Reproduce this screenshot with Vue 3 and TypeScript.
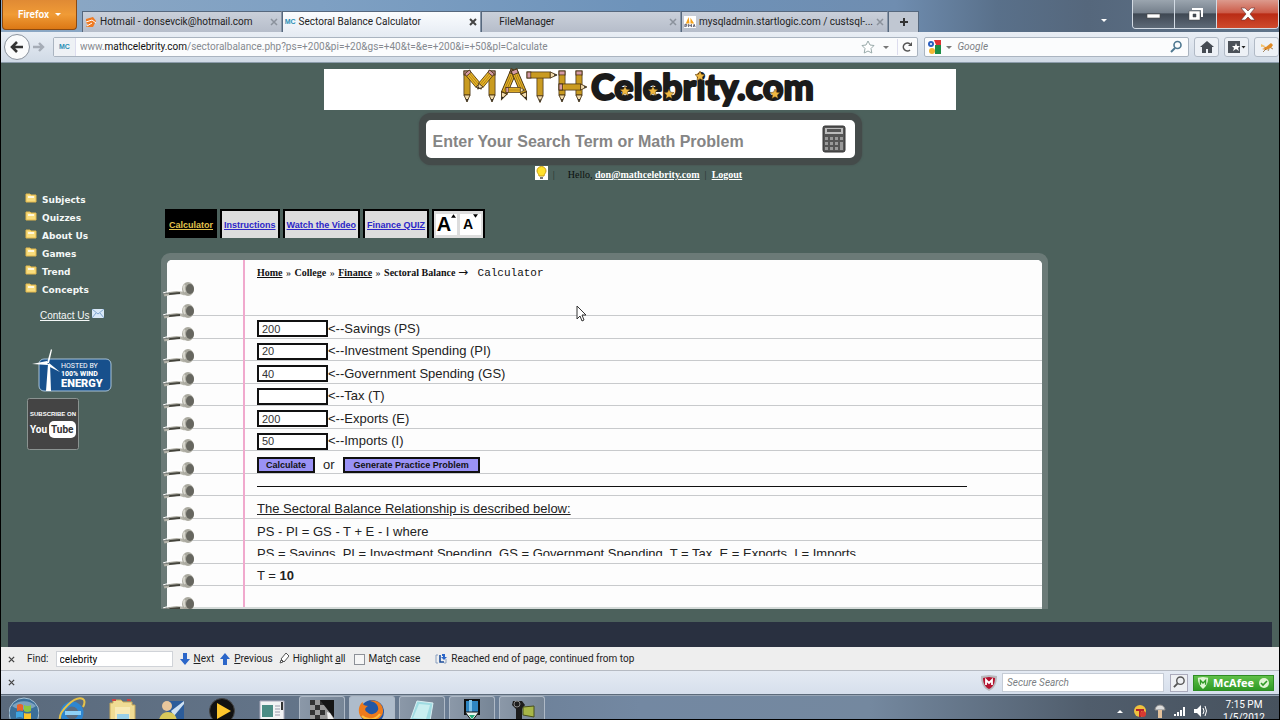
<script setup lang="ts">
import { ref } from 'vue'

interface BrowserTab { title: string; kind: 'hotmail' | 'mc' | 'none' | 'pma'; active: boolean }
interface Field { id: string; label: string; value: string }
interface Star { x: number; y: number }

const browserTabs: BrowserTab[] = [
  { title: 'Hotmail - donsevcik@hotmail.com', kind: 'hotmail', active: false },
  { title: 'Sectoral Balance Calculator', kind: 'mc', active: true },
  { title: 'FileManager', kind: 'none', active: false },
  { title: 'mysqladmin.startlogic.com / custsql-...', kind: 'pma', active: false },
]

const menu: string[] = ['Subjects', 'Quizzes', 'About Us', 'Games', 'Trend', 'Concepts']
const pageTabs: string[] = ['Calculator', 'Instructions', 'Watch the Video', 'Finance QUIZ']

const fields = ref<Field[]>([
  { id: 'ps', label: 'Savings (PS)', value: '200' },
  { id: 'pi', label: 'Investment Spending (PI)', value: '20' },
  { id: 'gs', label: 'Government Spending (GS)', value: '40' },
  { id: 't', label: 'Tax (T)', value: '' },
  { id: 'e', label: 'Exports (E)', value: '200' },
  { id: 'i', label: 'Imports (I)', value: '50' },
])

const stars: Star[] = [
  { x: 165, y: 22 }, { x: 193, y: 22 }, { x: 209, y: 25 }, { x: 240, y: 7 }, { x: 315, y: 25 },
]
const pencils: string[] = [
  'translate(7 2) scale(1 1)',
  'translate(32 2) scale(1 1)',
  'translate(7 3) rotate(-40) scale(1 .72)',
  'translate(32 3) rotate(40) scale(1 .72)',
  'translate(54 1) rotate(23) scale(1 1.04)',
  'translate(54 1) rotate(-23) scale(1 1.04)',
  'translate(46 21) rotate(-90) scale(.8 .6)',
  'translate(80 4) scale(1 .95)',
  'translate(67 6) rotate(-90) scale(1 .97)',
  'translate(102 2) scale(1 1)',
  'translate(119 2) scale(1 1)',
  'translate(99 18) rotate(-90) scale(1 .9)',
]
const findText = ref('celebrity')
const matchCase = ref(false)
</script>

<template>
  <div class="window">
    <header class="titlebar">
      <button class="firefox">Firefox <span class="tri"></span></button>
      <nav class="tabs" aria-label="Browser tabs">
        <div v-for="t in browserTabs" :key="t.title" class="tab" :class="{ active: t.active }">
          <svg v-if="t.kind === 'hotmail'" class="fav" viewBox="0 0 12 12"><path d="M1 3L8 1l3 4-3 6-7 0 2-3-2-1z" fill="#ef7a22" /><path d="M1 6l6-2 4 3M2 10l5-3" stroke="#fff" fill="none" /></svg>
          <span v-else-if="t.kind === 'mc'" class="mc">MC</span>
          <svg v-else-if="t.kind === 'pma'" class="fav pma" viewBox="0 0 13 13"><rect width="13" height="13" fill="#fff" /><path d="M2 8l3-7 1 7zM7 8V2l4 6z" fill="#f5a21b" /><path d="M1 12V9h2v2H1M5 12V9l2 2 1-2v3M10 12l1-3 1 3" stroke="#556" fill="none" /></svg>
          <span v-else class="fav"></span>
          <span class="tab-title">{{ t.title }}</span>
          <button class="close" aria-label="Close tab"><svg viewBox="0 0 8 8"><path d="M1 1l6 6M7 1L1 7" /></svg></button>
        </div>
        <button class="newtab" aria-label="New tab"><svg viewBox="0 0 10 10"><path d="M5 1v8M1 5h8" /></svg></button>
      </nav>
      <span class="all-tabs tri"></span>
      <div class="controls">
        <button aria-label="Minimize"><svg viewBox="0 0 16 14"><rect x="1" y="7" width="13" height="4" fill="#fff" stroke="#444" stroke-width=".6" /></svg></button>
        <button aria-label="Restore"><svg viewBox="0 0 16 14"><path d="M4 1h11v9h-2V3H4z" fill="#fff" /><path d="M1 4h11v9H1zM5 7v3h3V7z" fill="#fff" fill-rule="evenodd" stroke="#444" stroke-width=".5" /></svg></button>
        <button class="red" aria-label="Close"><svg viewBox="0 0 16 14"><path d="M1 1h4l3 3 3-3h4l-5 6 5 6h-4L8 10l-3 3H1l5-6z" fill="#fff" stroke="#633" stroke-width=".6" /></svg></button>
      </div>
    </header>

    <div class="navbar">
      <button class="back" aria-label="Back"><svg viewBox="0 0 14 12"><path d="M7 1L2 6l5 5M2 6h11" fill="none" stroke="#333" stroke-width="2.6" /></svg></button>
      <button class="fwd" aria-label="Forward"><svg viewBox="0 0 12 10"><path d="M6 1l4 4-4 4M0 5h10" fill="none" stroke="#a5acb6" stroke-width="2.4" /></svg></button>
      <div class="urlbox">
        <span class="mc ident">MC</span>
        <a class="url" href="#">www.<b>mathcelebrity.com</b>/sectoralbalance.php?ps=+200&amp;pi=+20&amp;gs=+40&amp;t=&amp;e=+200&amp;i=+50&amp;pl=Calculate</a>
        <svg class="i14" viewBox="0 0 14 14"><path d="M7 1l2 4 4 .5-3 3 .8 4.500L7 11l-3.800 2L4 8.500l-3-3L5 5z" fill="#fff" stroke="#9aa" /></svg>
        <span class="tri small"></span>
        <button class="reload" aria-label="Reload"><svg viewBox="0 0 12 12"><path d="M9 9a4 4 0 1 1 0-6" fill="none" stroke="#555" stroke-width="1.600" /><path d="M11 1v4H7z" fill="#555" /></svg></button>
      </div>
      <div class="gsearch">
        <svg class="google" viewBox="0 0 14 14"><rect width="14" height="14" fill="#fff" /><path d="M7 0h7v5H9z" fill="#d33" /><path d="M8 5h6v9H8z" fill="#1c8d45" /><circle cx="4" cy="4" r="3" fill="#2b5fc0" /><circle cx="4" cy="4" r="1" fill="#fff" /><circle cx="5" cy="11" r="3" fill="#f2b632" /></svg>
        <span class="tri small"></span>
        <input aria-label="Google search" placeholder="Google" />
        <svg class="i14" viewBox="0 0 14 14"><circle cx="8.500" cy="5" r="3.500" fill="none" stroke="#4e7890" stroke-width="1.600" /><path d="M6 8l-4 4" stroke="#4e7890" stroke-width="2" /></svg>
      </div>
      <button class="tool" aria-label="Home"><svg viewBox="0 0 14 12"><path d="M7 0l7 6h-2v6H8V8H6v4H2V6H0z" fill="#454b53" /></svg></button>
      <button class="tool" aria-label="Bookmarks"><svg viewBox="0 0 18 12"><rect width="12" height="12" fill="#4b5158" /><path d="M8 2l1 3h3L10 7l1 3-3-2-3 2 1-3-2-2h3z" fill="#fff" /><path d="M13.500 5h4l-2 2.500z" fill="#222" /></svg></button>
      <button class="tool last" aria-label="Add-on"><svg viewBox="0 0 14 12"><path d="M2 5l4 1 5-4 2 2-2 3-5 2-4-1 3-1z" fill="#df8a26" /><path d="M1 3l4 2-4 1z" fill="#f4c066" /><path d="M3 11l3-3M8 10l1-2M11 7l2 1" stroke="#8a5a20" stroke-width=".7" /></svg></button>
    </div>

    <main class="page">
      <div class="banner">
        <svg class="logo" viewBox="0 0 360 41" role="img" aria-label="Math Celebrity logo">
          <defs>
            <g id="pencil">
              <rect x="-3" y="0" width="6" height="24" fill="#eab526" stroke="#4a3412" stroke-width=".9" />
              <path d="M-1 5v19M1 5v19" stroke="#8d6a17" stroke-width=".7" />
              <rect x="-3" y="0" width="6" height="4" fill="#d59aa5" stroke="#4a3412" stroke-width=".9" />
              <path d="M-3 24h6L0 31z" fill="#f2dcae" stroke="#4a3412" stroke-width=".9" />
              <path d="M-1 28h2L0 31z" fill="#222" />
            </g>
          </defs>
          <use v-for="(p, n) in pencils" :key="n" href="#pencil" :transform="p" />
          <text x="131" y="31" class="logo-text">Celebrity.com</text>
          <path v-for="(s, n) in stars" :key="'s' + n" :transform="`translate(${s.x} ${s.y})`" d="M0-5l1.500 3.200 3.500.4-2.600 2.400.7 3.500L0 2.800l-3.100 1.700.7-3.500L-5-1.400l3.500-.4z" fill="#f0b840" stroke="#4a3412" stroke-width=".5" />
        </svg>
      </div>

      <div class="site-search">
        <input aria-label="Search term or math problem" placeholder="Enter Your Search Term or Math Problem" />
        <button aria-label="Calculator"><svg viewBox="0 0 24 28"><rect x="1" y="1" width="22" height="26" rx="2" fill="#555" stroke="#333" /><rect x="3" y="3" width="18" height="6" fill="#bbb" /><rect x="5" y="4" width="14" height="3" fill="#555" /><g fill="#999"><path d="M3 12h3v3H3zM8 12h3v3H8zM13 12h3v3h-3zM18 12h3v3h-3zM3 17h3v3H3zM8 17h3v3H8zM13 17h3v3h-3zM3 22h3v3H3zM8 22h3v3H8zM13 22h3v3h-3zM18 17h3v8h-3z" /></g></svg></button>
      </div>

      <div class="hello">
        <svg class="bulb" viewBox="0 0 13 14"><rect width="13" height="14" fill="#fff" /><path d="M2 5a4.500 4.500 0 0 1 9 0c0 2-2 3-2 5H4C4 8 2 7 2 5z" fill="#ffe12b" stroke="#c69b12" /><path d="M5 11h3v2H5z" fill="#777" /></svg>
        <span class="bar">|</span>
        <span>Hello, <a href="#">don@mathcelebrity.com</a></span>
        <span class="bar">|</span>
        <a href="#">Logout</a>
      </div>

      <div class="columns">
        <aside>
          <ul>
            <li v-for="m in menu" :key="m">
              <svg viewBox="0 0 12 10"><path d="M1 1h4l1 1h5v7H1z" fill="#f8dc7c" stroke="#e2b84d" /><path d="M3 3h6v2H3z" fill="#fff8dc" /></svg>
              <a href="#">{{ m }}</a>
            </li>
          </ul>
          <p class="contact"><a href="#">Contact Us</a><svg viewBox="0 0 12 9"><rect width="12" height="9" fill="#d9e8f7" /><path d="M0 0l6 5 6-5M0 9l4-5M12 9L8 4" fill="none" stroke="#7fa6d0" /></svg></p>
          <svg class="wind" viewBox="0 0 82 44">
            <rect x="8" y="11" width="72" height="32" rx="5" fill="#17508c" stroke="#a9c3d8" />
            <path d="M15 43l2-27h2l1 27zM16 15l4-14 1 1-3 13zM17 17L1 16l15-3zM18 15l11 9-12-6z" fill="#fff" />
            <text x="30" y="20" class="w1">HOSTED BY</text>
            <text x="30" y="28" class="w2">100% WIND</text>
            <text x="30" y="39" class="w3">ENERGY</text>
          </svg>
          <svg class="yt" viewBox="0 0 52 52">
            <rect x=".5" y=".5" width="51" height="51" rx="2" fill="#444" stroke="#8b9391" />
            <text x="26" y="18" text-anchor="middle" class="y1">SUBSCRIBE ON</text>
            <text x="3" y="35" class="y2">You</text>
            <rect x="22" y="23" width="27" height="17" rx="5" fill="#fff" />
            <text x="24" y="35" class="y2 dark">Tube</text>
          </svg>
        </aside>

        <section>
          <nav class="page-tabs" aria-label="Page sections">
            <a v-for="(p, n) in pageTabs" :key="p" href="#" :class="{ on: n === 0 }">{{ p }}</a>
            <div class="sizer">
              <button class="big" aria-label="Larger text">A<svg viewBox="0 0 6 4"><path d="M0 4l3-4 3 4z" /></svg></button>
              <button aria-label="Smaller text">A<svg viewBox="0 0 6 4"><path d="M0 0l3 4 3-4z" /></svg></button>
            </div>
          </nav>

          <div class="panel">
            <div class="paper">
              <svg class="rings" aria-hidden="true">
                <defs>
                  <g id="ring">
                    <path d="M2 6c8-3 14-4 21-1" fill="none" stroke="#b5b4aa" stroke-width="3" />
                    <path d="M1 4c9-3 14-3 20-3" fill="none" stroke="#fff" stroke-width="1" />
                    <path d="M7 5l11-1" stroke="#44443c" stroke-width="2" />
                    <path d="M1 5l7-1" stroke="#777b77" />
                    <ellipse cx="26" cy="0" rx="6" ry="7" fill="#aaa99f" />
                    <ellipse cx="28" cy="0" rx="4" ry="5" fill="#66665f" />
                    <path d="M23-4c-2 2-1 5 0 7" stroke="#d8d7ce" stroke-width="2" fill="none" />
                  </g>
                  <pattern id="coil" x="-5" y="18" width="40" height="45" patternUnits="userSpaceOnUse">
                    <use href="#ring" y="11" /><use href="#ring" y="33" />
                  </pattern>
                </defs>
                <rect x="-5" y="18" width="40" height="331" fill="url(#coil)" />
              </svg>
              <div class="content">
                <div class="crumbs">
                  <a href="#">Home</a> <i>»</i> College <i>»</i> <a href="#">Finance</a> <i>»</i> Sectoral Balance <span class="arrow">→</span> <span class="mono">Calculator</span>
                </div>
                <form @submit.prevent>
                  <div v-for="f in fields" :key="f.id" class="row">
                    <input :id="f.id" v-model="f.value" type="text" />
                    <label :for="f.id">&lt;--{{ f.label }}</label>
                  </div>
                  <div class="row actions">
                    <button type="submit">Calculate</button><span>or</span><button type="button" class="wide">Generate Practice Problem</button>
                  </div>
                </form>
                <hr />
                <p class="row"><u>The Sectoral Balance Relationship is described below:</u></p>
                <p class="row">PS - PI = GS - T + E - I where</p>
                <p class="row clipped">PS = Savings, PI = Investment Spending, GS = Government Spending, T = Tax, E = Exports, I = Imports</p>
                <p class="row">T =&nbsp;<b>10</b></p>
              </div>
            </div>
          </div>
        </section>
      </div>
      <footer></footer>
      <svg class="cursor" viewBox="0 0 12 18"><path d="M1 1v13l3-3 2 5 2-1-2-5h4z" fill="#fff" stroke="#333" /></svg>
    </main>

    <div class="findbar">
      <button class="x" aria-label="Close find bar"><svg viewBox="0 0 8 8"><path d="M1 1l6 6M7 1L1 7" /></svg></button>
      <label for="find">Find:</label>
      <input id="find" v-model="findText" type="text" />
      <button><svg viewBox="0 0 10 12"><path d="M3 0h4v6h3l-5 6-5-6h3z" fill="#2b66c9" /></svg><span><u>N</u>ext</span></button>
      <button><svg viewBox="0 0 10 12"><path d="M3 12h4V6h3L5 0 0 6h3z" fill="#2b66c9" /></svg><span><u>P</u>revious</span></button>
      <button><svg viewBox="0 0 10 12"><path d="M7 0l3 3-5 6-3-3zM2 7l2 2-3 1z" fill="#fff" stroke="#555" /></svg><span>Highlight <u>a</u>ll</span></button>
      <label class="check"><input v-model="matchCase" type="checkbox" /><span>Mat<u>c</u>h case</span></label>
      <span class="status"><svg viewBox="0 0 12 12"><path d="M1 2h2M1 2v8h2M11 6v4H9" fill="none" stroke="#8aa0c0" /><path d="M5 2v7h4" fill="none" stroke="#1f4f9c" stroke-width="1.600" /><path d="M7 2h2v3" fill="none" stroke="#2b66c9" stroke-width="2" /><path d="M6 4h6L9 7z" fill="#2b66c9" /></svg>Reached end of page, continued from top</span>
    </div>

    <div class="addonbar">
      <button class="x" aria-label="Close add-on bar"><svg viewBox="0 0 8 8"><path d="M1 1l6 6M7 1L1 7" /></svg></button>
      <svg class="shield" viewBox="0 0 16 16"><path d="M0 1l8-1 8 1c0 7-2 12-8 15C2 13 0 8 0 1z" fill="#b9b9bd" /><path d="M2 3l6-1 6 1c0 5-2 9-6 11-4-2-6-6-6-11z" fill="#b5122f" /><path d="M5 10V5l3 3 3-3v5" fill="none" stroke="#fff" stroke-width="1.800" /></svg>
      <input aria-label="Secure search" placeholder="Secure Search" />
      <button class="lens" aria-label="Search"><svg viewBox="0 0 14 14"><circle cx="8" cy="5" r="4" fill="none" stroke="#555" stroke-width="1.500" /><path d="M5 8l-4 4" stroke="#555" stroke-width="2" /></svg></button>
      <button class="mcafee"><svg viewBox="0 0 14 14"><path d="M1 1l6-1 6 1c0 6-2 10-6 13C3 11 1 7 1 1z" fill="#dff5d4" /><path d="M4 9V4l3 3 3-3v5" fill="none" stroke="#2f9a25" stroke-width="1.600" /></svg>McAfee<svg viewBox="0 0 12 12"><circle cx="6" cy="6" r="5" fill="#dff5d4" /><path d="M3 6l2 2 4-4" fill="none" stroke="#2f9a25" stroke-width="1.600" /></svg></button>
    </div>

    <footer class="taskbar">
      <div class="apps">
        <button aria-label="Start"><svg viewBox="0 0 30 24"><circle cx="15" cy="17" r="15" fill="#3b6f99" stroke="#a9c4d6" /><path d="M3 10a15 12 0 0 1 24 0c-7 5-17 5-24 0z" fill="#a8c3d6" opacity=".6" /><path d="M8 9q3-2 6 0v6q-3-1-6 0z" fill="#e8632b" /><path d="M15 9q4 2 7 0v6q-4 2-7 0z" fill="#8cc63f" /><path d="M7 16q4-1 7 0v6q-3-2-7 0z" fill="#3fa4e0" /><path d="M15 17q4 1 7 0v6q-4 1-7 0z" fill="#fbc52c" /></svg></button>
        <button aria-label="Internet Explorer"><svg viewBox="0 0 30 24"><circle cx="15" cy="17" r="9" fill="none" stroke="#2f86cf" stroke-width="5" /><path d="M8 17h16" stroke="#8fd0f5" stroke-width="4" /><path d="M3 24C1 16 18-1 26 3c3 2 1 6 0 8" fill="none" stroke="#e6c24a" stroke-width="2" /></svg></button>
        <button aria-label="Explorer"><svg viewBox="0 0 30 24"><path d="M3 7h3V4h8l2 2h9v3h3v15H3z" fill="#f0dc94" stroke="#c7a95a" /><path d="M5 4h4M20 4h4" stroke="#c44" stroke-width="2" /><path d="M8 11h15v13H8z" fill="#f8eab5" /><path d="M10 18h12v6H10z" fill="#9ad0e8" /></svg></button>
        <button aria-label="Remote support"><svg viewBox="0 0 30 24"><path d="M10 5h17v19H10z" fill="#2c5c9a" /><path d="M14 15L27 5v3L17 20z" fill="#cfe1f2" /><circle cx="10" cy="10" r="5" fill="#eac79c" /><path d="M2 24q2-8 9-8t9 8z" fill="#d8c85a" /></svg></button>
        <button aria-label="Media player"><svg viewBox="0 0 30 24"><circle cx="15" cy="15" r="12.500" fill="#111" stroke="#444" /><path d="M10 7l14 8-14 8z" fill="#fdc62c" /></svg></button>
        <button aria-label="Documents"><svg viewBox="0 0 30 24"><path d="M3 5h24v19H3z" fill="#f2f3f4" stroke="#aab" /><path d="M5 9h11v12H5z" fill="#4b8c84" /><path d="M18 10h5M18 13h5M18 16h5M18 19h5" stroke="#99a" /><path d="M24 6h2v8h-2z" fill="#333" /></svg></button>
        <button class="run" aria-label="Editor"><svg viewBox="0 0 30 24"><path d="M3 3h24v21H3z" fill="#999" /><path d="M3 3h5v5H3zM13 3h5v5h-5zM8 8h5v5H8zM3 13h5v5H3zM13 13h5v5h-5zM8 18h5v6H8z" fill="#333" /><path d="M13 3h14v18z" fill="#151515" /><path d="M20 15l3 1 3 5 2 3h-7z" fill="#eee" /></svg></button>
        <button class="run lit" aria-label="Firefox"><svg viewBox="0 0 30 24"><circle cx="15" cy="15" r="12" fill="#2458a5" /><path d="M13 4c6-2 14 3 13 11-1 9-15 12-22 5-4-5-2-13 2-15-1 3 2 4 5 4-3 2-4 4-1 6 4 4 9 2 11-2 1-4-2-8-8-9z" fill="#ee7b1c" /><path d="M5 19c5 5 14 4 18-2" stroke="#fbc243" stroke-width="2" fill="none" /></svg></button>
        <button class="run" aria-label="Notepad"><svg viewBox="0 0 30 24"><path d="M10 4l16 2-3 18H3z" fill="#9fdbe2" stroke="#d9eff2" /><path d="M12 7l11 1-4 14-13-1z" fill="#c9eef0" /></svg></button>
        <button class="run" aria-label="Capture"><svg viewBox="0 0 30 24"><path d="M8 3h14v14H8z" fill="#2f86c2" stroke="#111" stroke-width="2" /><path d="M12 3h3v12h-3z" fill="#7cc3ec" /><path d="M8 15l7 9 7-9z" fill="#e8f3ee" stroke="#111" /><path d="M12 18h6l-3 4z" fill="#2a7" /></svg></button>
        <button class="run" aria-label="Camera"><svg viewBox="0 0 30 24"><path d="M6 4h9l3 4-3 4v12H9V12L5 8z" fill="#1c1c1c" /><circle cx="10" cy="7" r="3" fill="none" stroke="#888" /><path d="M16 10l11-1v11l-11-2z" fill="#a7b648" stroke="#48501c" /></svg></button>
      </div>
      <div class="tray">
        <svg viewBox="0 0 14 14"><path d="M4 9l3-3 3 3z" fill="#fff" /></svg>
        <svg viewBox="0 0 14 14"><circle cx="7" cy="7" r="6" fill="#f0c23d" /><path d="M3 5h8v2H8v6H6V7H3z" fill="#b6202c" /><circle cx="10" cy="10" r="3" fill="#d83a32" /></svg>
        <svg viewBox="0 0 14 14"><path d="M2 6a5 5 0 0 1 10 0z" fill="#ddd" stroke="#888" /><path d="M5 6h4v8H5z" fill="#e2c09a" /></svg>
        <svg viewBox="0 0 14 14"><path d="M1 12v-2h2v2zM4 12V8h2v4zM7 12V6h2v6zM10 12V3h2v9z" fill="#fff" /></svg>
        <svg viewBox="0 0 14 14"><path d="M1 5h3l4-4v12L4 9H1z" fill="#fff" /><path d="M10 4q2 3 0 6M12 2q3 5 0 10" fill="none" stroke="#fff" /></svg>
        <time>7:15 PM<br />1/5/2012</time>
      </div>
    </footer>
  </div>
</template>

<style>
body { margin: 0; background: #000; }
</style>

<style scoped>
* { box-sizing: border-box; }
button, input { font: inherit; padding: 0; margin: 0; }
button { cursor: pointer; }
input { min-width: 0; outline: 0; }
svg { display: block; flex: none; }
p, ul { margin: 0; padding: 0; }
.window { display: flex; flex-direction: column; height: 100vh; padding: 0 1px 1px; font: 10px/14px Roboto, "Open Sans", sans-serif; color: #222; overflow: hidden; }
.tri { display: inline-block; border: 3px solid transparent; border-top-color: #fff; border-bottom: 0; }
.tri.small { border-top-color: #777; }

.titlebar { flex: none; display: flex; height: 32px; padding-left: 1px; background: linear-gradient(90deg, #8da8c4, #7ea0c3 25%, #6e93ba 50%, #6f8db0 70%, #59708a 78%, #55677c 85%, #60748a); }
.firefox { width: 75px; height: 30px; border: 1px solid #8b4a12; border-top: 0; border-radius: 0 0 4px 4px; background: linear-gradient(#e08a34, #f09b36 50%, #dc7815); color: #fff; font-weight: 600; display: flex; align-items: center; justify-content: center; gap: 6px; }
.tabs { display: flex; flex: 0 1 837px; margin: 11px 0 0 5px; min-width: 0; }
.tab { flex: 1 1 0; display: flex; align-items: center; gap: 3px; padding: 0 3px 0 2px; border: 1px solid #56687e; border-bottom: 0; border-right-color: #8896a8; background: linear-gradient(#cad0da, #b6bdca); }
.tab.active { background: linear-gradient(#fafcfe, #e9eef5); }
.tab-title { flex: 1; white-space: nowrap; }
.fav { width: 12px; height: 12px; }
.mc { color: #2a8fb5; font: bold 7px/12px "Liberation Sans", sans-serif; }
.close { border: 0; background: none; width: 8px; height: 8px; }
.close path { stroke: #8b929c; stroke-width: 1.5; }
.active .close path { stroke: #444; stroke-width: 2; }
.newtab { flex: none; width: 31px; border: 1px solid #56687e; border-bottom: 0; background: #c0c7d2; display: grid; place-items: center; }
.newtab svg { width: 10px; height: 10px; }
.newtab path { stroke: #333; stroke-width: 2; }
.all-tabs { margin: 19px 0 0 auto; align-self: flex-start; }
.controls { display: flex; width: 147px; height: 29px; margin-left: 25px; border: 1px solid #d3dbe4; border-top: 0; border-radius: 0 0 4px 4px; overflow: hidden; }
.controls button { flex: 1; border: 0; border-right: 1px solid #d3dbe4; background: linear-gradient(#9ba5af, #75808c 45%, #3f4853 50%, #5e6a78); display: grid; place-items: center; }
.controls .red { flex: 0 0 61px; border-right: 0; background: linear-gradient(#dc9a8d, #cc5c49 45%, #ba2c15 50%, #cf4a2c); }
.controls svg { width: 16px; height: 14px; }

.navbar { flex: none; height: 31px; display: flex; align-items: center; padding: 0 0 0 3px; background: linear-gradient(#e9eef5, #d0dae6); border-bottom: 1px solid #8c9cab; }
.back { width: 26px; height: 26px; border: 1px solid #8b939e; border-radius: 50%; background: #fafbfc; display: grid; place-items: center; }
.back svg { width: 14px; height: 12px; }
.fwd { width: 18px; height: 18px; border: 0; background: none; display: grid; place-items: center; }
.fwd svg { width: 12px; height: 10px; }
.urlbox, .gsearch { display: flex; align-items: center; height: 20px; background: #fbfcfd; border: 1px solid #aab4c0; border-radius: 2px; }
.urlbox { flex: 873 1 0; min-width: 0; margin-left: 5px; gap: 8px; padding-right: 2px; }
.ident { padding: 3px 5px; background: #eef1f5; border-right: 1px solid #dde; }
.urlbox .ident + .url { margin-left: -4px; }
.url { flex: 1; min-width: 0; color: #85898f; text-decoration: none; white-space: nowrap; overflow: hidden; }
.url b { color: #111; font-weight: 400; }
.i14 { width: 14px; height: 14px; }
.reload { border: 0; border-left: 1px solid #dde; background: none; width: 18px; height: 16px; display: grid; place-items: center; }
.reload svg { width: 12px; height: 12px; }
.gsearch { flex: 259 1 0; min-width: 0; margin-left: 6px; padding: 0 5px 0 2px; gap: 5px; }
.gsearch input { flex: 1; border: 0; background: none; font-style: italic; }
.google { width: 14px; height: 14px; }
input::placeholder { color: #7c7f84; opacity: 1; }
.tool { height: 20px; width: 25px; margin-left: 5px; border: 1px solid #b1bac6; border-radius: 3px; background: #edf1f6; display: grid; place-items: center; }
.tool svg { height: 12px; max-width: 18px; }

.page { position: relative; flex: 1 1 auto; min-height: 0; background: #4c615c; display: flex; flex-direction: column; overflow: hidden; }
.banner { width: 50%; max-width: 632px; height: 41px; margin: 6px auto 0; background: #fff; display: flex; justify-content: center; flex: none; }
.logo { width: 360px; height: 41px; overflow: visible; }
.logo-text { font: 900 36px "Lato", sans-serif; fill: #1b1b1b; stroke: #1b1b1b; stroke-width: 2; stroke-linejoin: round; }
.site-search { flex: none; align-self: center; width: 443px; height: 52px; margin-top: 3px; padding: 0 9px 0 7px; border: 7px solid #444b4a; border-radius: 12px; background: #fff; display: flex; align-items: center; box-shadow: 0 0 2px #444b4a; }
.site-search input { flex: 1; height: 100%; border: 0; padding-top: 6px; background: none; font: bold 16px/20px "Liberation Sans", Arial, sans-serif; }
.site-search input::placeholder { color: #858585; }
.site-search button { border: 0; background: none; }
.site-search svg { width: 24px; height: 28px; }
.hello { flex: none; display: flex; justify-content: center; align-items: center; height: 18px; margin-top: 1px; padding-right: 3px; font: 10px/14px "Liberation Serif", "Times New Roman", serif; color: #0b100f; gap: 5px; }
.hello a { color: #fff; font-weight: bold; }
.bulb { width: 13px; height: 14px; margin-bottom: 4px; }
.bar { color: #24302d; }
.hello .bar:first-of-type { margin-right: 8px; }

.columns { flex: none; display: flex; margin-top: 8px; }
aside { flex: none; width: 160px; padding-left: 24px; }
ul { list-style: none; margin-top: -1px; }
li { display: flex; align-items: center; gap: 5px; height: 18px; }
li a { color: #f4f8f7; font: bold 9px/14px "DejaVu Sans", Verdana, sans-serif; text-decoration: none; }
li svg { width: 12px; height: 10px; margin-bottom: 5px; }
.contact { display: flex; gap: 3px; margin: 10px 0 0 15px; font: 10px/14px "Liberation Sans", Arial, sans-serif; }
.contact a { color: #f4f8f7; }
.contact svg { width: 12px; height: 9px; }
.wind { width: 82px; height: 44px; margin: 25px 0 0 6px; }
.wind text { fill: #fff; font-family: "Open Sans", sans-serif; }
.wind .w1 { font: 7px Roboto, sans-serif; }
.wind .w2 { font: 800 7px Roboto, sans-serif; }
.wind .w3 { font: 900 11px Roboto, sans-serif; }
.yt { width: 52px; height: 52px; margin: 6px 0 0 2px; }
.y1 { font: bold 6px "Liberation Sans", sans-serif; fill: #fff; }
.y2 { font: bold 10px Roboto, "Liberation Sans", sans-serif; fill: #fff; }
.dark { fill: #333; }
section { flex: 0 1 887px; min-width: 0; padding-top: 17px; }
.page-tabs { display: flex; gap: 3px; margin-left: 4px; height: 29px; font: bold 9px/12px "Liberation Sans", Arial, sans-serif; }
.page-tabs a, .sizer { display: flex; align-items: center; border: 2px solid #000; border-bottom: 0; background: #ddd; color: #2b25c8; padding: 0 2px; }
.page-tabs .on { background: #000; color: #e3c34d; }
.sizer { gap: 3px; }
.sizer button { border: 0; width: 21px; height: 21px; background: #fff; color: #000; font: bold 14px/21px "Liberation Sans", Arial, sans-serif; display: flex; justify-content: center; }
.sizer .big { font-size: 20px; line-height: 20px; }
.sizer svg { width: 5px; height: 4px; }
.panel { margin-top: 15px; padding: 7px 6px 0; background: #6b7a77; border-radius: 9px 9px 0 0; }
.paper { display: flex; border-radius: 5px 5px 0 0; border-bottom: 2px solid #d5dbd9; background: linear-gradient(#f0a9cd, #f0a9cd) 76px 0 / 2px 100% no-repeat, linear-gradient(#fdfdfd, #fdfdfd) 0 0 / 100% 55px no-repeat, linear-gradient(#c8cacc 1px, #fdfdfd 1px, #fdfdfd 23px, #c8cacc 23px, #c8cacc 24px, #fdfdfd 24px) 0 10px / 100% 45px repeat-y; }
.rings { flex: none; width: 90px; height: 347px; overflow: visible; }
.content { flex: 1; min-width: 0; height: 347px; padding-right: 75px; font: 13px/22px "Liberation Sans", Arial, sans-serif; color: #222; }
.crumbs { height: 57px; padding-top: 5px; font: bold 10px/14px "Liberation Serif", "Times New Roman", serif; color: #111; }
.crumbs a { color: #111; }
.crumbs i { margin: 0 1px; font-style: normal; font-weight: 400; }
.arrow { font: 12px/14px "DejaVu Sans", sans-serif; }
.mono { margin-left: 7px; font: 11px/14px "Liberation Mono", "Courier New", monospace; }
.row { display: flex; align-items: center; height: 22px; white-space: nowrap; }
.row:nth-child(odd) { height: 23px; }
.row input { width: 71px; height: 17px; border: 2px solid #111; background: #fff; padding: 0 3px; font-size: 11px; line-height: 13px; color: #333; }
.row.actions { height: 26px; }
.actions span { margin: 0 8px; }
.actions button { height: 16px; padding: 0 7px; border: 2px solid #111; background: #9a92f5; color: #111; font: bold 9px/12px "Liberation Sans", Arial, sans-serif; }
.actions .wide { padding: 0 9px; }
hr { margin: 8px 0 11px; border: 0; height: 1px; background: #111; }
.row.clipped { display: block; height: 13px; line-height: 22px; margin: 0 0 8px; overflow: hidden; }
footer { flex: none; }
.page > footer { margin: 13px 7px 0; height: 26px; background: #293040; }
.cursor { position: absolute; left: 575px; top: 242px; width: 12px; height: 18px; }

.findbar, .addonbar { flex: none; display: flex; align-items: center; height: 24px; padding-left: 7px; background: #eeeeee; border-bottom: 1px solid #b5bac2; }
.findbar { padding-top: 1px; }
.findbar button, .addonbar .x { display: flex; align-items: center; gap: 4px; border: 0; background: none; color: #222; }
.x svg { width: 7px; height: 7px; }
.x path { stroke: #444; stroke-width: 1.5; }
.findbar > label:not(.check) { margin: 0 7px 0 12px; }
.findbar > input { width: 117px; height: 16px; padding: 0 3px; border: 1px solid #d0d3d8; background: #fff; margin-right: 7px; }
.findbar button:not(.x) { margin-right: 6px; }
.findbar button:not(.x) svg { width: 10px; height: 12px; }
.check { display: flex; align-items: center; gap: 4px; margin: 0 15px 0 2px; }
.check input { appearance: none; width: 11px; height: 11px; border: 1px solid #8d9198; background: #f6f6f6; }
.status { display: flex; align-items: center; gap: 4px; }
.status svg { width: 12px; height: 12px; }
.addonbar { background: linear-gradient(#e4eaf3, #d6dfec); padding-right: 5px; border-bottom-color: #5d6b7b; }
.shield { width: 16px; height: 16px; margin: 0 5px 0 auto; }
.addonbar input { width: 162px; height: 19px; border: 1px solid #c5ccd6; background: #fff; padding: 0 4px; font-style: italic; }
.lens { width: 18px; height: 18px; margin: 0 5px 0 6px; border: 1px solid #aab; background: #eef0f3; display: grid; place-items: center; }
.lens svg { width: 13px; height: 13px; }
.mcafee { width: 81px; height: 16px; border: 1px solid #2e8c25; background: linear-gradient(#5fc04a, #2f9a25); color: #fff; font: bold 11px/14px "Open Sans", sans-serif; display: flex; align-items: center; justify-content: space-between; padding: 0 3px; }
.mcafee svg { width: 12px; height: 12px; }

.taskbar { display: flex; height: 24px; overflow: hidden; background: linear-gradient(90deg, #5a6a7c, #64758a 25%, #7388a2 50%, #74889f 68%, #505d6c 85%, #47525e); border-top: 1px solid #97a5b5; }
.apps { display: flex; }
.apps button { width: 50px; height: 24px; padding: 0; border: 0; background: none; display: flex; justify-content: center; }
.apps button:first-child { width: 46px; }
.apps .run { width: 46px; margin: 0 2px; border: 1px solid #aeb9c6; border-bottom: 0; background: linear-gradient(90deg, #8b98a8, #768596); border-radius: 3px 3px 0 0; }
.apps .lit { background: #aebccb; }
.apps svg { width: 30px; height: 24px; }
.tray { margin-left: auto; display: flex; gap: 6px; padding: 8px 14px 0 0; }
.tray svg { width: 14px; height: 14px; }
time { margin: -6px 0 0 10px; color: #fff; text-align: center; line-height: 13px; }
</style>
